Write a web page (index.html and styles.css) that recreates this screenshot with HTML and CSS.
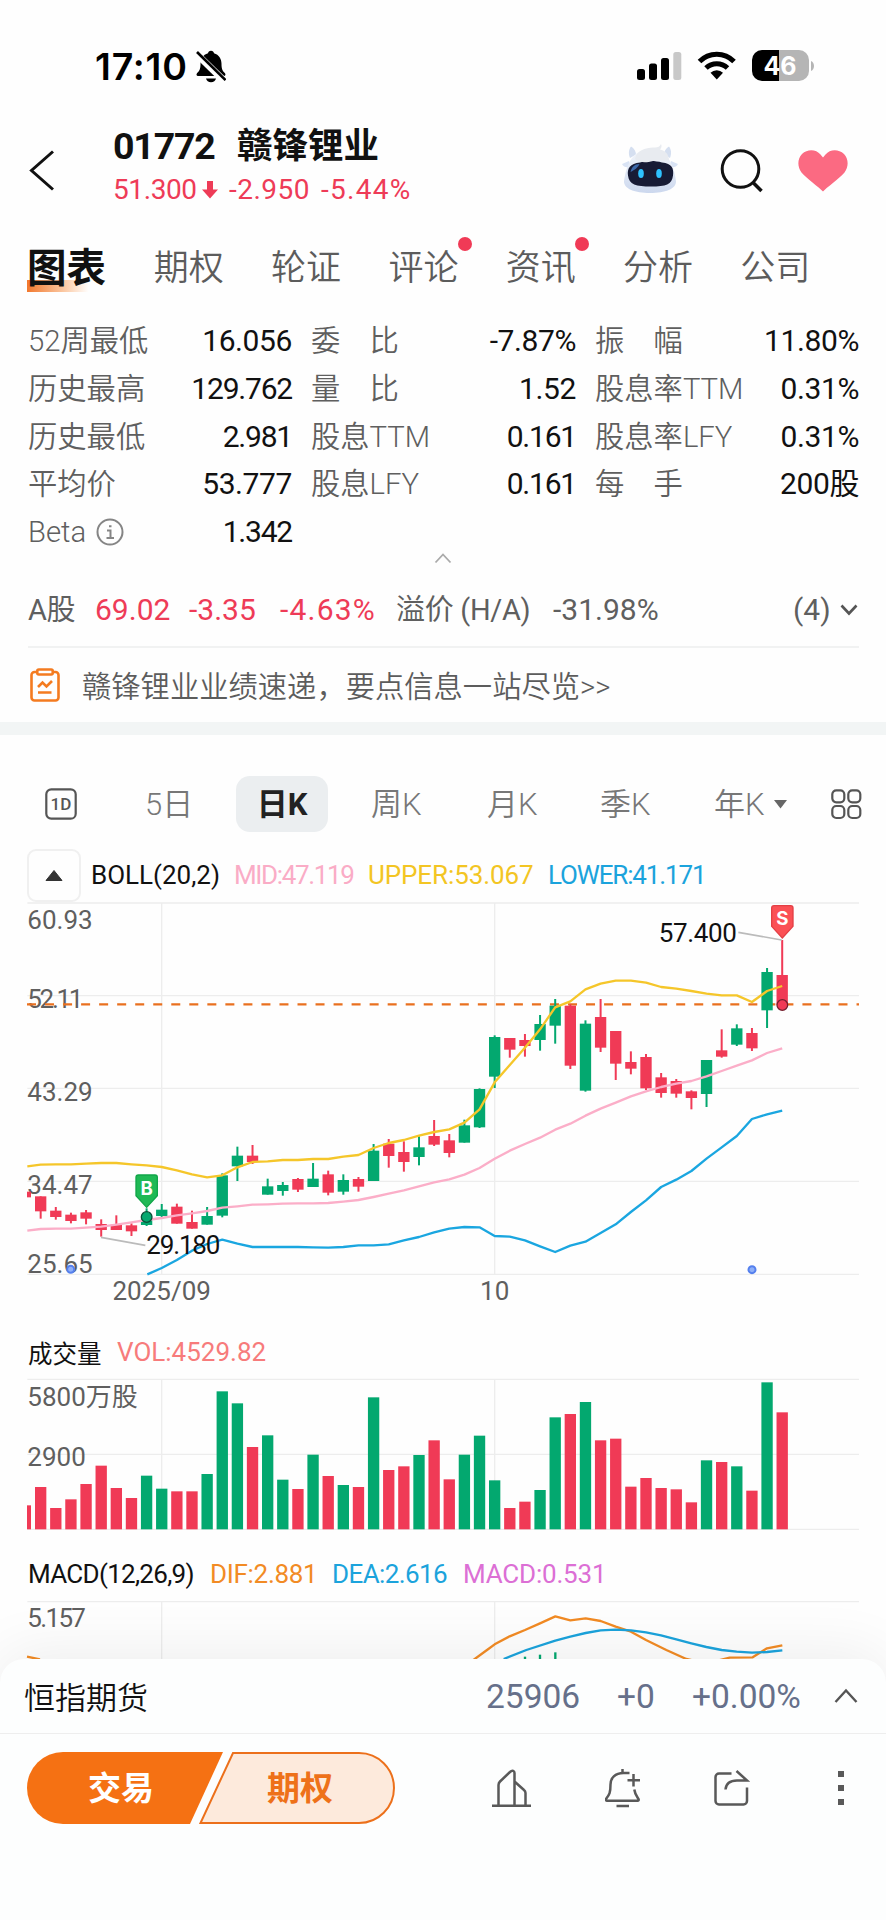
FILE: index.html
```html
<!DOCTYPE html>
<html lang="zh-CN">
<head>
<meta charset="utf-8">
<title>01772 赣锋锂业</title>
<link rel="stylesheet" href="styles.css">
</head>
<body>
<div class="screen">
  <div class="status">
    <span class="clock">17:10</span>
    <svg class="mute" width="30" height="33" viewBox="0 0 30 33">
      <path d="M15 .7c1.8 0 2.700 1.200 3 2.600 5 1.500 7.500 5.500 7.500 10.500 0 5 .9 7 3.500 9.500.9 1.100.5 2.700-1 2.700H2c-1.500 0-2-1.600-1-2.700 2.600-2.500 3.500-4.500 3.500-9.500 0-5 2.500-9 7.500-10.500.3-1.400 1.200-2.600 3-2.600zM10 28.500h10c-.5 2.300-2.500 3.800-5 3.800s-4.500-1.500-5-3.800z"/>
      <path d="M-1 2.500 30 32.500" stroke="#fff" stroke-width="7"/>
      <path d="M1 2 29.500 30.200" stroke="#000" stroke-width="2.600"/>
    </svg>
    <svg class="signals" width="178" height="34" viewBox="0 0 178 34">
      <rect x="0" y="20" width="8" height="11" rx="2.500"/><rect x="12" y="14.500" width="8" height="16.500" rx="2.500"/>
      <rect x="24" y="9" width="8" height="22" rx="2.500"/><rect x="36.300" y="3" width="8" height="28" rx="2.500" fill="#c8c8c8"/>
      <path d="M62.500 12.500a24 24 0 0 1 34.500 0" fill="none" stroke="#000" stroke-width="5"/>
      <path d="M69 19a15.500 15.500 0 0 1 21.500 0" fill="none" stroke="#000" stroke-width="5"/>
      <path d="M73.500 23.800a9 9 0 0 1 12.500 0l-6.200 6.700z"/>
      <path d="M125 1h17v31h-17a10 10 0 0 1-10-10V11a10 10 0 0 1 10-10z"/>
      <path d="M142 1h20a10 10 0 0 1 10 10v11a10 10 0 0 1-10 10h-20z" fill="#b5b5b5"/>
      <path d="M174 12c4 1.500 4 8.500 0 10z" fill="#b5b5b5"/>
      <text class="battery-text" x="143" y="25.500" text-anchor="middle">46</text>
    </svg>
  </div>

  <header class="header">
    <svg class="back" width="28" height="44" viewBox="0 0 28 44"><path d="M25 3.500 3.500 22.500 25 41.500" fill="none" stroke="#111" stroke-width="3"/></svg>
    <div class="title">
      <div class="title-main"><span class="code">01772</span><span class="name">赣锋锂业</span></div>
      <div class="title-sub"><span class="last">51.300</span><svg width="16" height="18" viewBox="0 0 16 18"><path d="M5 0h6v8.500h5L8 17.500 0 8.500h5z" fill="#ee3b57"/></svg><span class="change">-2.950</span><span class="percent">-5.44%</span></div>
    </div>
    <svg class="robot" width="58" height="50" viewBox="0 0 58 50">
      <defs><linearGradient id="head" x2="0" y2="1"><stop stop-color="#f3f6fb"/><stop offset="1" stop-color="#ccd8ee"/></linearGradient></defs>
      <path d="M9 14C7 9 8 5 10 2.500c3 1.500 5 5 5 8zM49 14c2-5 1-9-1-11.500-3 1.500-5 5-5 8z" fill="#d5dff0"/>
      <path d="M8 17 1 20c2 4 6 4 8 2zM50 17l7 3c-2 4-6 4-8 2z" fill="#d9e3f4"/>
      <path d="M29 6c17 0 23 12 26 31 .5 8-11 12-26 12S2.500 45 3 37C6 18 12 6 29 6z" fill="url(#head)"/>
      <path d="M19 18.500C26 16.500 34 16.500 41 18.500c10 1 12 6 11 13-1 9-7 11-22 11s-22-2-23-11c-1-7 2-12 12-13z" fill="#171b35"/>
      <path d="M9.500 28c1-5 4-8 9-8-1 3-5 6-9 8z" fill="#3c68a9"/>
      <path d="M14 15C15 6 26 3 34 3.500c3 0 5-1 6-3.500 1 2 .5 4-1 5.500C44 6 48 11 48 16c-7 2-9-1-16 1-7 2-13 2-18-2z" fill="#e8ebf0"/>
      <ellipse cx="20" cy="29.500" rx="2.800" ry="4.500" fill="#2ec2ff"/><ellipse cx="38" cy="29.500" rx="2.800" ry="4.500" fill="#2ec2ff"/>
    </svg>
    <svg class="search" width="44" height="46" viewBox="0 0 44 46"><circle cx="20.500" cy="21" r="18.300" fill="none" stroke="#111" stroke-width="3"/><path d="m33 34.500 8.500 8.500" stroke="#111" stroke-width="3.500"/></svg>
    <svg class="heart" width="50" height="42" viewBox="0 0 50 42"><path d="M25 41.500C22 38 8 28 3.500 22.500-1 16.500-.5 8.500 4 4c5.500-5.200 14-5 18.500.5L25 7.500l2.500-3C32-1 40.500-1.200 46 4c4.500 4.500 5 12.500.5 18.500C42 28 28 38 25 41.500z" fill="#fb6a82"/></svg>
  </header>

  <nav class="tabs">
    <span class="tab tab-active">图表</span><span class="tab">期权</span><span class="tab">轮证</span><span class="tab tab-dot">评论</span><span class="tab tab-dot">资讯</span><span class="tab">分析</span><span class="tab">公司</span>
  </nav>

  <section class="stats">
    <span class="label">52周最低</span><span class="value">16.056</span><span class="label">委<i class="em"></i>比</span><span class="value">-7.87%</span><span class="label">振<i class="em"></i>幅</span><span class="value">11.80%</span>
    <span class="label">历史最高</span><span class="value tight">129.762</span><span class="label">量<i class="em"></i>比</span><span class="value">1.52</span><span class="label">股息率TTM</span><span class="value">0.31%</span>
    <span class="label">历史最低</span><span class="value tight">2.981</span><span class="label">股息TTM</span><span class="value tight">0.161</span><span class="label">股息率LFY</span><span class="value">0.31%</span>
    <span class="label">平均价</span><span class="value">53.777</span><span class="label">股息LFY</span><span class="value tight">0.161</span><span class="label">每<i class="em"></i>手</span><span class="value">200股</span>
    <span class="label">Beta<svg class="info" width="28" height="28" viewBox="0 0 28 28" fill="none" stroke="#858585" stroke-width="2"><circle cx="14" cy="14" r="12.500"/><path d="M11 12.500h3.500v7.500M10.500 20h7.500M13 8.200h2.500" /></svg></span><span class="value tight">1.342</span>
  </section>
  <div class="collapse"><svg width="18" height="12" viewBox="0 0 18 12"><path d="m1.500 10.500 7.500-8 7.500 8" fill="none" stroke="#aaa" stroke-width="1.800"/></svg></div>

  <section class="ashare">
    <span class="cjk">A股</span><span class="down">69.02</span><span class="down">-3.35</span><span class="down percent-a">-4.63%</span><span class="cjk">溢价 (H/A)</span><span>-31.98%</span><span class="count">(4)</span>
    <svg width="18" height="14" viewBox="0 0 18 14"><path d="m1.500 2.500 7.500 8 7.500-8" fill="none" stroke="#555" stroke-width="2.600"/></svg>
  </section>
  <section class="notice">
    <svg width="30" height="34" viewBox="0 0 30 34" fill="none" stroke="#f47b20" stroke-width="2.600"><path d="M7 4H4.500A3 3 0 0 0 1.500 7v22.500a3 3 0 0 0 3 3h21a3 3 0 0 0 3-3V7a3 3 0 0 0-3-3H23"/><rect x="7.300" y="1.500" width="15.400" height="5" rx="1.500"/><path d="m8 19 4.500-4.500 4 4 5.500-5.500M8 24.500h13.500"/></svg>
    <span>赣锋锂业业绩速递，要点信息一站尽览&gt;&gt;</span>
  </section>
  <div class="band"></div>

  <nav class="periods">
    <svg class="oneday" width="32" height="32" viewBox="0 0 32 32"><rect x="1.300" y="1.300" width="29.400" height="29.400" rx="5" fill="none" stroke="#555" stroke-width="2.200"/><text x="16" y="22" text-anchor="middle">1D</text></svg>
    <span>5日</span><span class="period-active">日K</span><span>周K</span><span>月K</span><span>季K</span><span>年K<svg class="caret" width="13" height="9" viewBox="0 0 13 9"><path d="M0 0h13L6.500 8.500z" fill="#666"/></svg></span>
    <svg class="apps" width="31" height="31" viewBox="0 0 31 31" fill="none" stroke="#555" stroke-width="2.200"><rect x="1.300" y="1.300" width="12" height="12" rx="4"/><rect x="17.300" y="1.300" width="12" height="12" rx="4"/><rect x="1.300" y="17" width="12" height="12" rx="4"/><rect x="17.300" y="17" width="12" height="12" rx="4"/></svg>
  </nav>

  <div class="legend boll">
    <span class="fold"><svg width="18" height="11" viewBox="0 0 18 11"><path d="M9 .5 17 10.500H1z" fill="#333" stroke="#333" stroke-linejoin="round"/></svg></span>
    <span>BOLL(20,2)</span><span class="mid">MID:47.119</span><span class="upper">UPPER:53.067</span><span class="lower">LOWER:41.171</span>
  </div>
  <svg class="chart" id="price" width="886" height="408" viewBox="0 36 2658 1224"></svg>

  <div class="legend vol"><span class="vol-name">成交量</span><span class="volval">VOL:4529.82</span></div>
  <svg class="chart" id="volume" width="886" height="154" viewBox="0 174 2658 462"></svg>

  <div class="legend macd"><span class="macd-name">MACD(12,26,9)</span><span class="dif">DIF:2.881</span><span class="dea">DEA:2.616</span><span class="macdval">MACD:0.531</span></div>
  <svg class="chart" id="macd" width="886" height="59" viewBox="0 840 2658 177"></svg>

  <footer class="dock">
    <div class="futures">
      <span class="fut-name">恒指期货</span><span>25906</span><span>+0</span><span>+0.00%</span>
      <svg width="24" height="16" viewBox="0 0 24 16"><path d="M1.500 14 12 2.500 22.500 14" fill="none" stroke="#555" stroke-width="2.400"/></svg>
    </div>
    <div class="actions">
      <div class="pill">
        <svg width="370" height="72" viewBox="0 0 370 72"><path d="M36 0h160l-33 72H36A36 36 0 0 1 36 0z" fill="#f57113"/><path d="M206 1h126a35 35 0 0 1 0 70H173.500z" fill="#fdeadc" stroke="#ec701b" stroke-width="2"/></svg>
        <span class="trade">交易</span><span class="option">期权</span>
      </div>
      <svg width="40" height="40" viewBox="0 0 40 40" fill="none" stroke="#595959" stroke-width="2.500"><path d="M0 37.700h39M6.500 37.500V17a5 5 0 0 1 1.500-3.500L18 4c2.500-2.500 4.500-1 4.500 1v32M22.500 13.500l9.500 8.500a4 4 0 0 1 1.500 3v12.500"/></svg>
      <svg width="36" height="40" viewBox="0 0 36 40" fill="none" stroke="#595959" stroke-width="2.500"><path d="M17.500 1v4M24.500 5h-6C10 5 5.500 10 5.500 16.500c0 8-1 10-4.500 14.500-.5 1 .2 1.800 1 1.800h30.500c1 0 1.500-.8 1-1.800-2-3-3.500-4.500-4.200-9.500M28.500 6v12.500M22.500 12.300h12.500M11.500 38h12.500"/></svg>
      <svg width="36" height="38" viewBox="0 0 36 38" fill="none" stroke="#595959" stroke-width="2.500"><path d="M17.500 4.500H5a3.500 3.500 0 0 0-3.500 3.500v24A3.500 3.500 0 0 0 5 35.500h24.500A3.500 3.500 0 0 0 33 32V18.500M22.500 2 33 11.500H23c-7 0-11 3.500-11.500 9"/></svg>
      <svg width="6" height="36" viewBox="0 0 6 36" fill="#595959"><path d="M0 1h6v6H0zM0 15h6v6H0zM0 29h6v6H0z"/></svg>
    </div>
  </footer>
</div>
<script src="chart.js"></script>
</body>
</html>
```
FILE: styles.css
```css
* { box-sizing: border-box; }
body { margin: 0; background: #fefefe; }
svg { display: block; flex: none; }
.screen { width: 886px; height: 1920px; overflow: hidden; font-family: Roboto, "Noto Sans CJK SC", sans-serif; color: #111; white-space: nowrap; }
.screen span { display: block; }

.status { height: 116px; display: flex; align-items: center; padding: 18px 71px 0 95px; }
.clock { width: 101px; font: 600 37.500px/44px Inter, sans-serif; letter-spacing: .8px; color: #000; }
.mute { margin-top: -2px; }
.signals { margin-left: auto; margin-top: -2px; }
.battery-text { font: 700 25px Inter, sans-serif; fill: #fff; }

.header { height: 110px; display: flex; padding-left: 28px; }
.back { margin-top: 32px; }
.title { width: 508px; margin: 7px 0 0 57px; }
.title-main { display: flex; height: 46px; line-height: 46px; }
.code { width: 124px; font-size: 37.500px; font-weight: 700; letter-spacing: -1.200px; }
.name { font-size: 35.500px; font-weight: 600; }
.title-sub { display: grid; grid-template-columns: 89px 27px 92px auto; align-items: center; height: 40px; font-size: 28px; line-height: 40px; color: #ee3b57; margin-top: 1px; }
.last { letter-spacing: -.4px; }
.change { letter-spacing: .5px; }
.percent { letter-spacing: 1.300px; }
.robot { margin-top: 28px; }
.search { margin: 32px 0 0 41px; }
.heart { margin: 34px 0 0 34px; }

.tabs { display: flex; height: 84px; padding-left: 27px; line-height: 85px; font-size: 35px; font-weight: 350; color: #5c5c5c; }
.tab { width: 117.300px; padding-left: 9.500px; position: relative; }
.tab-active { padding-left: 0; font-size: 39.500px; font-weight: 700; color: #111; background: linear-gradient(90deg, #f2782d, #fbc9a4 60%, #fff) no-repeat 0 54px / 62px 12px; }
.tab-dot::after { content: ""; position: absolute; left: 79px; top: 11px; width: 14px; height: 14px; border-radius: 50%; background: #f03a56; }

.stats { display: grid; grid-template-columns: 130px 134px 142px 142px 159px 124px; grid-auto-rows: 47.800px; padding: 7px 0 0 28px; line-height: 48px; font-size: 30px; }
.stats .label { color: #5f5f5f; font-size: 29.300px; font-weight: 350; }
.stats .label:nth-child(6n+3), .stats .label:nth-child(6n+5) { padding-left: 19px; }
.stats .value { text-align: right; letter-spacing: -.4px; }
.stats .tight { letter-spacing: -1.200px; }
.em { display: inline-block; width: 1em; }
.info { display: inline-block; vertical-align: -4px; margin-left: 10px; }
.collapse { display: flex; justify-content: center; height: 16px; margin-top: -4px; }

.ashare { display: grid; grid-template-columns: 67px 94px 91px 116px 157px 240px 45px auto; align-items: baseline; height: 76px; margin: 4px 27px 0 28px; border-bottom: 2px solid #f1f2f2; font-size: 30px; line-height: 76px; color: #5f5f5f; }
.ashare .cjk { font-size: 29px; letter-spacing: -.3px; }
.ashare svg { align-self: center; margin-left: 2px; }
.down { color: #ee3b57; }
.percent-a { letter-spacing: 1.200px; }
.notice { display: flex; align-items: center; gap: 22px; height: 74px; padding-left: 30px; font-size: 29.300px; font-weight: 350; color: #5c5c5c; }
.notice span { margin-top: -2px; }
.band { height: 13px; background: #f2f5f5; }

.periods { display: flex; height: 114px; padding: 25px 0 0 45px; align-items: center; font-size: 31px; font-weight: 350; color: #777; }
.periods > span { line-height: 57px; }
.periods > span:nth-of-type(1) { margin-left: 68px; width: 91px; }
.periods .period-active { width: 92px; height: 56px; border-radius: 14px; background: #ebeef0; color: #222; font-weight: 700; text-align: center; }
.periods > span:nth-of-type(3) { margin-left: 43px; width: 116px; }
.periods > span:nth-of-type(4) { width: 113px; }
.periods > span:nth-of-type(5) { width: 114px; }
.periods > span:nth-of-type(6) { width: 117px; display: flex; align-items: center; gap: 9px; }
.oneday text { font: 500 17px Roboto, sans-serif; fill: #555; }

.legend { display: grid; align-items: center; font-size: 26px; color: #111; padding-left: 28px; }
.boll { grid-template-columns: 64px 143px 134px 180px auto; height: 53px; padding-left: 27px; }
.fold { width: 54px; height: 53px; border: 2px solid #f0f0f0; border-radius: 9px; }
.legend .fold { display: grid; place-items: center; }
.mid { color: #faacc6; letter-spacing: -1.350px; }
.upper { color: #f3c523; letter-spacing: -.1px; }
.lower { color: #1ba3dc; letter-spacing: -1.150px; }
.vol { grid-template-columns: 89px auto; height: 68px; padding-top: 17px; }
.vol-name { font-size: 24.500px; }
.volval { color: #f77b7b; }
.macd { grid-template-columns: 182px 122px 131px auto; height: 68px; padding-top: 17px; }
.macd-name { letter-spacing: -.7px; }
.dif { color: #f28b24; letter-spacing: -.3px; }
.dea { color: #1ba3dc; letter-spacing: -.6px; }
.macdval { color: #dc6fd5; letter-spacing: -.2px; }
.chart text { font-family: Roboto, "Noto Sans CJK SC", sans-serif; font-size: 78px; fill: #5f5f5f; }
.chart .callout { fill: #111; }
.chart .pin { font: 700 56px Inter, sans-serif; fill: #fff; }

.dock { position: relative; height: 261px; border-radius: 24px 24px 0 0; background: #fdfefe; box-shadow: 0 -6px 60px rgba(0, 0, 0, .07); }
.futures { display: grid; grid-template-columns: 462px 131px 75px 142px auto; align-items: center; height: 75px; padding: 1px 0 0 24px; border-bottom: 1px solid #eee; font-size: 33.500px; color: #66708a; }
.fut-name { font-size: 31px; color: #111; font-weight: 350; margin-top: -2px; }
.actions { display: flex; height: 72px; margin: 18px 42px 0 27px; align-items: center; }
.pill { width: 370px; height: 72px; display: grid; margin-right: 95px; }
.pill > * { grid-area: 1 / 1; }
.pill span { line-height: 74px; font-size: 33px; font-weight: 700; }
.trade { color: #fff; padding-left: 61px; }
.option { color: #ee7119; padding-left: 240px; }
.actions > svg:nth-of-type(1) { margin-right: 73px; }
.actions > svg:nth-of-type(2) { margin-right: 73px; }
.actions > svg:nth-of-type(3) { margin-right: auto; }
```
FILE: chart.js
```js
const RED = '#f03a56', GREEN = '#03a86f', STEP = 45.4, X0 = 122;
const x = i => X0 + STEP * i;

// [colour, body top, body bottom, wick top, wick bottom, volume top]
const bars = [
  ['r',919,964,919,986,501],['r',962,981,951,989,564],['r',974,993,968,1000,538],['r',967,986,960,1003,492],
  ['r',1002,1020,988,1040,437],['r',1004,1020,976,1020,504],['r',1006,1024,1000,1038,534],['g',985,1005,955,1008,467],
  ['g',959,978,942,985,506],['r',950,1001,941,1001,514],['r',996,1016,962,1016,514],['g',978,1004,951,1004,462],
  ['g',856,977,850,982,214],['g',797,829,770,873,250],['r',797,816,765,822,381],['g',889,914,866,914,346],
  ['g',885,903,876,917,479],['r',867,899,864,906,507],['g',866,891,819,891,404],['r',853,908,842,916,468],
  ['g',870,905,853,914,495],['r',867,890,861,905,501],['g',782,873,762,873,232],['r',761,798,747,833,450],
  ['r',786,816,754,845,439],['g',772,801,739,826,405],['r',738,764,690,768,361],['r',751,789,732,802,478],
  ['g',706,758,689,758,404],['g',597,712,595,714,347],['g',441,560,436,594,481],['r',444,479,444,503,564],
  ['r',450,468,432,500,545],['g',402,450,375,482,510],['g',347,407,327,461,292],['r',347,527,343,537,282],
  ['g',401,602,391,605,246],['r',381,473,327,486,361],['r',423,521,423,570,356],['r',516,536,484,553,500],
  ['r',501,595,492,600,474],['r',562,609,549,623,504],['r',573,611,567,623,508],['r',604,624,601,658,547],
  ['g',510,612,510,651,421],['r',481,500,418,503,426],['g',415,464,403,468,439],['r',429,475,414,483,512],
  ['g',246,361,234,414,187],['r',255,345,150,345,277]
];
const upper = [824,823,823,821,819,819,823,826,831,841,853,862,856,832,816,814,810,810,807,807,800,795,774,759,750,737,726,718,698,658,577,525,473,418,352,334,298,281,272,272,278,291,296,303,311,316,316,336,303,288];
const mid = [1017,1016,1016,1013,1010,1004,997,990,984,976,970,963,953,949,944,943,941,940,940,939,935,930,921,911,901,889,877,868,854,834,806,782,762,743,719,701,677,656,638,619,604,591,581,573,559,543,527,511,489,475];
const lower = [1134,1110,1082,1062,1049,1061,1071,1071,1071,1071,1072,1073,1071,1066,1066,1063,1051,1041,1027,1016,1011,1012,1038,1040,1051,1069,1086,1067,1055,1029,1003,966,931,891,869,843,806,772,738,687,673,662];

const colour = b => (b[0] === 'r' ? RED : GREEN);
const rect = (cx, w, top, bottom, fill) => `<rect x="${cx - w / 2}" y="${top}" width="${w}" height="${bottom - top}" fill="${fill}"/>`;
const line = (x1, y1, x2, y2, stroke = '#ededed', w = 4, extra = '') => `<path d="M${x1} ${y1}L${x2} ${y2}" stroke="${stroke}" stroke-width="${w}" ${extra}/>`;
const poly = (points, stroke) => `<polyline points="${points.join(' ')}" fill="none" stroke="${stroke}" stroke-width="7" stroke-linejoin="round"/>`;
const series = (values, from, head) => [head, ...values.map((v, i) => `${x(i + from)},${v}`)];
const grid = (rows, top, bottom) => rows.map(y => line(82, y, 2577, y)).join('') + line(485, top, 485, bottom) + line(1484, top, 1484, bottom);
const text = (tx, ty, s, extra = '') => `<text x="${tx}" y="${ty}" ${extra}>${s}</text>`;
const pin = (cx, top, fill, edge, s) =>
  `<path d="M${cx - 25} ${top}h50q7 0 7 7v55l-32 35-32-35v-55q0-7 7-7z" fill="${fill}" stroke="${edge}" stroke-width="4"/>` + text(cx, top + 59, s, 'class="pin" text-anchor="middle"');
const event = (cx, cy) => `<circle cx="${cx}" cy="${cy}" r="10.500" fill="#8fb0f8" stroke="#5580ee" stroke-width="6"/>`;

document.getElementById('price').innerHTML =
  grid([39, 317, 595, 874, 1153], 39, 1153) +
  text(82, 117, '60.93') + text(82, 354, '52.11', 'letter-spacing="-7"') + text(82, 632, '43.29') + text(82, 911, '34.47') + text(82, 1150, '25.65') +
  line(81, 343, 2577, 343, '#e9701f', 7, 'stroke-dasharray="27 27.1"') +
  rect(87, 12, 905, 922, RED) +
  bars.map((b, i) => rect(x(i), 6, b[3], b[4], colour(b)) + rect(x(i), 34, b[1], b[2], colour(b))).join('') +
  poly(series(upper, 0, '82,829'), '#f5c62a') + poly(series(mid, 0, '82,1022'), '#fbaec8') + poly(series(lower, 8, '442,1153'), '#1aa6e0') +
  line(303, 1042, 436, 1066, '#bbb', 5) + line(2215, 127, 2345, 150, '#bbb', 5) +
  text(439, 1093, '29.180', 'class="callout" letter-spacing="-3.500"') + text(2210, 155, '57.400', 'class="callout" text-anchor="end" letter-spacing="-1"') +
  pin(440, 855, '#1fb955', '#10a548', 'B') + pin(2347, 47, '#fb5055', '#e33f45', 'S') +
  '<circle cx="440" cy="981" r="16" fill="#04a86f" stroke="#0b5038" stroke-width="4"/>' +
  '<circle cx="2347" cy="345" r="16" fill="#f03a56" stroke="#74202f" stroke-width="4"/>' +
  event(212, 1138) + event(2256, 1139) +
  text(485, 1230, '2025/09', 'text-anchor="middle"') + text(1484, 1230, '10', 'text-anchor="middle"');

document.getElementById('volume').innerHTML =
  grid([178, 403, 628], 178, 628) + text(82, 258, '5800万股') + text(82, 437, '2900') +
  rect(87, 12, 556, 628, RED) + bars.map((b, i) => rect(x(i), 34, b[5], 628, colour(b))).join('');

const dif = ['1420,1020','1461,990','1484,973','1529,949','1575,930','1620,910','1666,889','1711,901','1757,895','1802,903','1847,920','1893,935','1938,960','1999,990','2059,1017','2120,1030','2189,1013','2258,1012','2301,985','2347,976'];
const dea = ['1511,1017','1579,990','1666,962','1711,950','1757,939','1802,931','1847,929','1893,931','1938,937','1983,946','2029,958','2074,970','2119,981','2165,990','2210,995','2256,998','2301,996','2347,991'];
document.getElementById('macd').innerHTML =
  grid([845], 845, 1017) + text(82, 922, '5.157', 'letter-spacing="-5"') +
  poly(['81,1010', '120,1018'], '#f28b24') + poly(dif, '#f28b24') + poly(dea, '#1ba3dc') +
  rect(1575, 7, 1010, 1017, GREEN) + rect(1620, 7, 1004, 1017, GREEN) + rect(1666, 7, 997, 1017, GREEN);
```
